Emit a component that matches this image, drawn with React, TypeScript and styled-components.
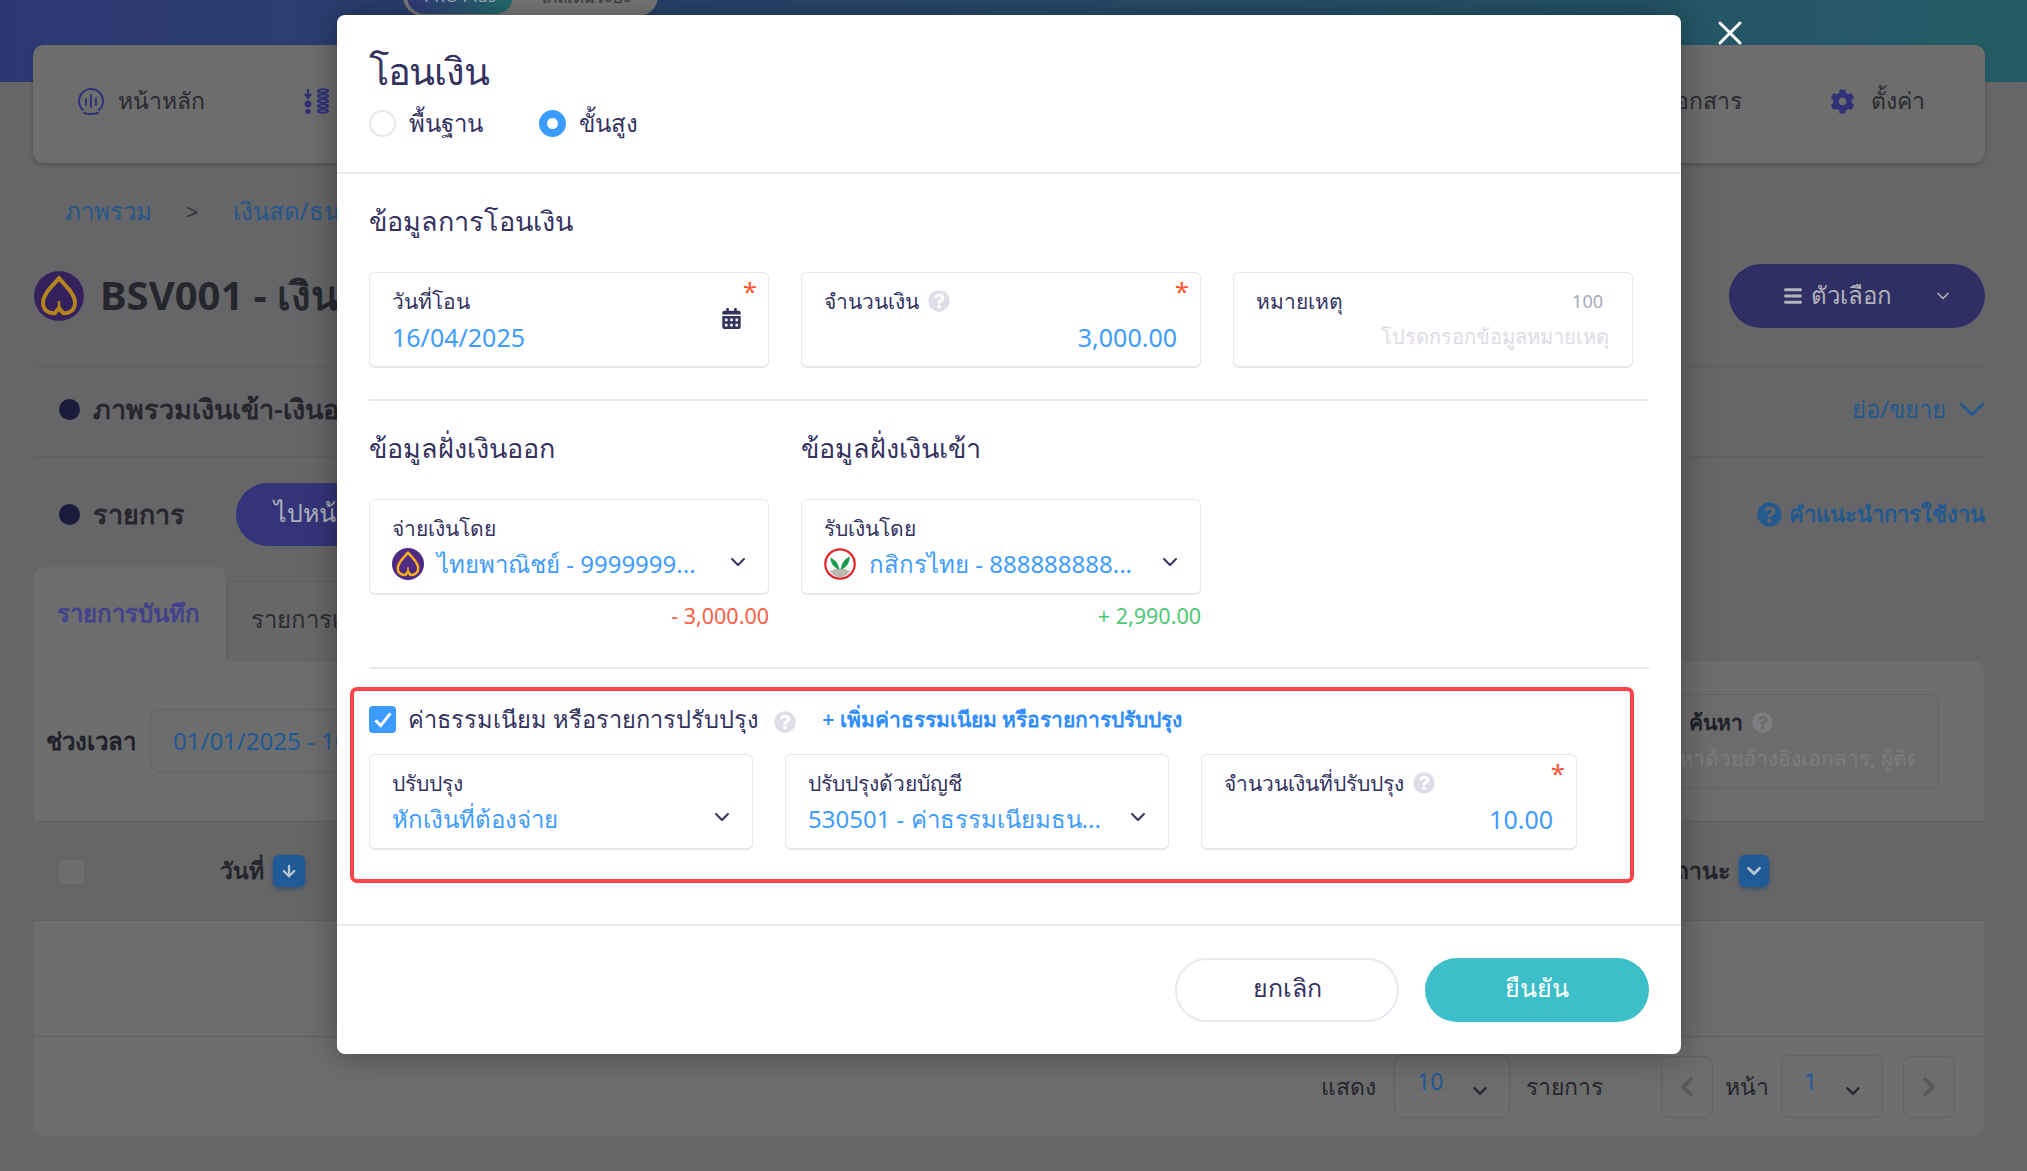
import React from "react";
import styled, { createGlobalStyle } from "styled-components";
import { ChevronDown, ChevronLeft, ChevronRight, X, ArrowDown } from "lucide-react";
import { FaCalendarAlt, FaCog, FaQuestionCircle, FaBars } from "react-icons/fa";

const FONT = `"Noto Sans", "Open Sans", Roboto, sans-serif`;

const GlobalStyle = createGlobalStyle`
  html, body {
    margin: 0;
    padding: 0;
    overflow: hidden;
    background: #666668;
  }
  * {
    box-sizing: border-box;
  }
  body {
    font-family: ${FONT};
  }
`;

const Page = styled.div`
  position: relative;
  width: 2027px;
  height: 1171px;
  overflow: hidden;
  padding: 45px 42px 0 33px;
  background: linear-gradient(90deg, #2d3873 0%, #235c64 100%) top / 100% 82px no-repeat, #666668;
`;

const PromoPill = styled.div`
  position: absolute;
  left: 403px;
  top: -24px;
  width: 255px;
  height: 40px;
  display: flex;
  align-items: center;
  gap: 26px;
  padding: 0 4px;
  border-radius: 20px;
  background: #7a7a7a;
  font-size: 17px;
  color: #3a3a3a;
`;

const PromoBadge = styled.span`
  width: 106px;
  height: 36px;
  border-radius: 18px;
  line-height: 36px;
  text-align: center;
  color: #a8b0c0;
  background: linear-gradient(90deg, #333a7a, #24706e);
`;

const Nav = styled.nav`
  height: 118px;
  display: flex;
  align-items: center;
  padding: 0 60px 6px 45px;
  border-radius: 10px;
  background: #6d6d6d;
  box-shadow: 0 2px 4px rgba(0, 0, 0, 0.2);
`;

const NavItem = styled.div<{ $gap?: number }>`
  display: flex;
  align-items: center;
  gap: 14px;
  margin-right: ${(p) => p.$gap ?? 0}px;
  font-size: 23px;
  color: #2a2a30;
  white-space: nowrap;
  svg {
    color: #31317a;
    flex: none;
  }
`;

const NavSpacer = styled.div`
  flex: 1;
`;

const GearIcon = styled(FaCog)`
  margin-right: 2px;
`;

const Crumbs = styled.div`
  display: flex;
  align-items: center;
  height: 32px;
  margin-top: 32px;
  margin-bottom: 1px;
  padding-left: 32px;
  font-size: 24px;
  color: #24578c;
`;

const CrumbSep = styled.span`
  margin: 0 34px;
  color: #33333a;
  font-size: 22px;
`;

const TitleRow = styled.div`
  display: flex;
  align-items: center;
  justify-content: space-between;
  height: 103px;
  margin-top: 37px;
  padding-bottom: 39px;
  border-bottom: 1px solid #5f5f62;
`;

const TitleLeft = styled.div`
  display: flex;
  align-items: center;
  gap: 16px;
  padding-left: 1px;
`;

const PageTitle = styled.h1`
  margin: 0;
  font-size: 40px;
  font-weight: 700;
  color: #26262e;
  white-space: nowrap;
`;

const OptionButton = styled.div`
  width: 256px;
  height: 64px;
  display: flex;
  align-items: center;
  justify-content: space-between;
  padding: 0 32px 0 54px;
  border-radius: 32px;
  background: #2f2f66;
  color: #b4b4b8;
  font-size: 24px;
`;

const OptionLabel = styled.span`
  display: flex;
  align-items: center;
  gap: 8px;
`;

const SectionRow = styled.div<{ $ruled?: boolean }>`
  display: flex;
  align-items: center;
  justify-content: space-between;
  height: ${(p) => (p.$ruled ? "90px" : "63px")};
  margin-top: ${(p) => (p.$ruled ? "0" : "26px")};
  padding-bottom: ${(p) => (p.$ruled ? "5px" : "0")};
  border-bottom: ${(p) => (p.$ruled ? "1px solid #5f5f62" : "none")};
`;

const SectionLeft = styled.div`
  display: flex;
  align-items: center;
`;

const Bullet = styled.span`
  width: 21px;
  height: 21px;
  margin: 0 13px 0 26px;
  border-radius: 50%;
  background: #1b1b3c;
`;

const SectionName = styled.span`
  font-size: 27px;
  font-weight: 600;
  color: #26262e;
  white-space: nowrap;
`;

const GotoButton = styled.div`
  width: 300px;
  height: 63px;
  margin-left: 51px;
  padding-left: 38px;
  border-radius: 32px;
  line-height: 58px;
  background: #34347a;
  color: #b0b0b8;
  font-size: 25px;
`;

const LinkText = styled.span<{ $bold?: boolean }>`
  display: flex;
  align-items: center;
  gap: ${(p) => (p.$bold ? "7px" : "13px")};
  font-size: ${(p) => (p.$bold ? "22px" : "24px")};
  font-weight: ${(p) => (p.$bold ? 600 : 400)};
  color: #22598f;
`;

const Tabs = styled.div`
  display: flex;
  align-items: flex-end;
  height: 94px;
  margin-top: 20px;
`;

const ActiveTab = styled.div`
  width: 194px;
  height: 95px;
  margin-bottom: -1px;
  padding: 27px 0 0 23px;
  position: relative;
  z-index: 1;
  border: 1px solid #656567;
  border-bottom: none;
  border-radius: 10px 10px 0 0;
  background: #6d6d6d;
  color: #42428c;
  font-size: 24px;
  font-weight: 600;
  white-space: nowrap;
`;

const IdleTab = styled.div`
  width: 300px;
  height: 79px;
  padding: 18px 0 0 23px;
  border: 1px solid #5f5f62;
  border-bottom: none;
  background: #686868;
  color: #2c2c33;
  font-size: 24px;
  white-space: nowrap;
`;

const Panel = styled.div`
  height: 477px;
  border: 1px solid #656567;
  border-radius: 0 10px 10px 10px;
  background: #6d6d6d;
`;

const FilterRow = styled.div`
  height: 160px;
  display: flex;
  align-items: center;
  justify-content: space-between;
  padding: 0 45px 0 12px;
`;

const FilterLeft = styled.div`
  display: flex;
  align-items: center;
  gap: 14px;
`;

const FilterLabel = styled.span`
  font-size: 24px;
  font-weight: 600;
  color: #20202a;
  white-space: nowrap;
`;

const DateBox = styled.div`
  width: 400px;
  height: 64px;
  padding-left: 22px;
  border: 1px solid #626265;
  border-radius: 10px;
  line-height: 62px;
  color: #1f5a96;
  font-size: 24px;
`;

const SearchBox = styled.div`
  width: 309px;
  height: 95px;
  padding: 12px 23px 0 20px;
  border: 1px solid #626265;
  border-radius: 8px;
`;

const SearchLabel = styled.div`
  display: flex;
  align-items: center;
  gap: 9px;
  height: 32px;
  margin-left: 38px;
  font-size: 21px;
  font-weight: 600;
  color: #20202a;
  svg {
    color: #7e7e82;
  }
`;

const SearchHint = styled.div`
  margin-top: 3px;
  font-size: 21px;
  color: #7c7c80;
  white-space: nowrap;
  overflow: hidden;
`;

const HeadRow = styled.div`
  height: 100px;
  display: flex;
  align-items: center;
  padding: 0 215px 0 24px;
  border-top: 1px solid #616164;
  border-bottom: 1px solid #616164;
  background: #666667;
  font-size: 23px;
  font-weight: 600;
  color: #24242c;
`;

const HeadCheck = styled.span`
  width: 27px;
  height: 27px;
  margin-right: 135px;
  border: 1px solid #626265;
  border-radius: 5px;
  background: #6d6d6d;
`;

const SortBadge = styled.span<{ $w: number }>`
  display: inline-flex;
  align-items: center;
  justify-content: center;
  width: ${(p) => p.$w}px;
  height: 32px;
  border-radius: 6px;
  background: #1f5a96;
  color: #b9c4d0;
  box-shadow: 0 2px 5px rgba(20, 60, 110, 0.5);
`;

const HeadCell = styled.span<{ $push?: boolean }>`
  display: flex;
  align-items: center;
  gap: 9px;
  margin-left: ${(p) => (p.$push ? "auto" : "0")};
`;

const EmptyRow = styled.div`
  height: 116px;
  border-bottom: 1px solid #616164;
`;

const PagerRow = styled.div`
  height: 99px;
  display: flex;
  align-items: center;
  justify-content: flex-end;
  padding-right: 29px;
  font-size: 23px;
  color: #26262e;
`;

const PagerSelect = styled.div<{ $w: number; $ml: number }>`
  position: relative;
  width: ${(p) => p.$w}px;
  height: 63px;
  margin: 0 16px 0 ${(p) => p.$ml}px;
  padding: 9px 0 0 22px;
  border: 1px solid #626265;
  border-radius: 8px;
  color: #1f5a96;
  svg {
    position: absolute;
    right: 18px;
    top: 24px;
    color: #222230;
  }
`;

const PagerArrow = styled.div<{ $ml: number; $mr: number }>`
  width: 52px;
  height: 62px;
  margin: 0 ${(p) => p.$mr}px 0 ${(p) => p.$ml}px;
  display: flex;
  align-items: center;
  justify-content: center;
  border: 1px solid #626265;
  border-radius: 8px;
  color: #57575c;
`;

const Modal = styled.div`
  position: absolute;
  left: 337px;
  top: 15px;
  width: 1344px;
  height: 1039px;
  display: flex;
  flex-direction: column;
  border-radius: 8px;
  background: #fff;
  color: #34335f;
  box-shadow: 0 0 34px rgba(0, 0, 0, 0.35);
`;

const CloseButton = styled.div`
  position: absolute;
  left: 1373px;
  top: 0px;
  width: 40px;
  height: 36px;
  color: #fff;
  display: flex;
  align-items: center;
  justify-content: center;
`;

const ModalHead = styled.div`
  height: 159px;
  padding: 29px 32px 0;
  border-bottom: 2px solid #e8e8f1;
`;

const ModalTitle = styled.h2`
  margin: 0;
  height: 52px;
  line-height: 52px;
  font-size: 38px;
  font-weight: 500;
  letter-spacing: -1.3px;
`;

const RadioRow = styled.div`
  display: flex;
  align-items: center;
  margin-top: 1px;
  height: 52px;
  font-size: 24px;
`;

const Radio = styled.span<{ $on?: boolean }>`
  width: 27px;
  height: 27px;
  margin-right: 13px;
  border-radius: 50%;
  background: #fff;
  border: ${(p) => (p.$on ? "8px solid #3b9bff" : "2px solid #e6e6ef")};
`;

const RadioLabel = styled.span`
  margin-right: 56px;
`;

const ModalBody = styled.div`
  flex: 1;
  padding: 0 32px;
`;

const Heading = styled.h3`
  margin: 0;
  height: 40px;
  line-height: 38px;
  font-size: 27px;
  font-weight: 500;
  white-space: nowrap;
`;

const Rule = styled.div`
  height: 2px;
  background: #e8e8f1;
`;

const Row3 = styled.div`
  display: grid;
  grid-template-columns: repeat(3, 400px);
  gap: 32px;
`;

const Field = styled.div`
  position: relative;
  height: 96px;
  padding: 11px 23px 0 22px;
  border: 1px solid #e6e6ef;
  border-bottom-width: 2px;
  border-radius: 6px;
  background: #fff;
  min-width: 0;
`;

const FieldLabel = styled.div`
  display: flex;
  align-items: center;
  justify-content: space-between;
  height: 34px;
  font-size: 21px;
  font-weight: 500;
  white-space: nowrap;
`;

const LabelLeft = styled.span`
  display: flex;
  align-items: center;
  gap: 9px;
`;

const HelpIcon = styled(FaQuestionCircle)<{ $shift?: boolean }>`
  color: #dedee9;
  flex: none;
  margin-left: ${(p) => (p.$shift ? "15px" : "0")};
  margin-top: ${(p) => (p.$shift ? "5px" : "0")};
`;

const Counter = styled.span`
  margin-right: 6px;
  font-size: 18px;
  font-weight: 400;
  color: #a9a9bd;
`;

const FieldValue = styled.div<{ $right?: boolean; $muted?: boolean; $thai?: boolean }>`
  display: flex;
  align-items: center;
  justify-content: ${(p) => (p.$right ? "flex-end" : "flex-start")};
  gap: 13px;
  height: 38px;
  padding-right: ${(p) => (p.$right ? "0" : "24px")};
  font-size: ${(p) => (p.$muted ? "20px" : p.$thai ? "24px" : "25px")};
  color: ${(p) => (p.$muted ? "#dcdce6" : "#419cff")};
  white-space: nowrap;
  overflow: hidden;
`;

const Required = styled.span`
  position: absolute;
  right: 11px;
  top: 5px;
  font-size: 26px;
  line-height: 26px;
  color: #ff5533;
`;

const CalendarIcon = styled(FaCalendarAlt)`
  position: absolute;
  right: 26px;
  top: 35px;
  color: #34335f;
`;

const FieldChevron = styled(ChevronDown)`
  position: absolute;
  right: 18px;
  top: 50px;
  color: #34335f;
`;

const Delta = styled.div<{ $plus?: boolean }>`
  height: 26px;
  margin-top: 8px;
  margin-bottom: 2px;
  line-height: 26px;
  text-align: right;
  font-size: 21.5px;
  color: ${(p) => (p.$plus ? "#4cc777" : "#ff5f45")};
`;

const Spaced = styled.div<{ $top: number }>`
  margin-top: ${(p) => p.$top}px;
`;

const AdjustBox = styled.div`
  width: 1284px;
  height: 196px;
  margin: 18px 0 0 -19px;
  padding: 15px 0 0 15px;
  border: 4px solid #ff444c;
  border-radius: 7px;
`;

const AdjustHead = styled.div`
  display: flex;
  align-items: center;
  height: 27px;
  font-size: 23.6px;
  white-space: nowrap;
`;

const Check = styled.span`
  width: 27px;
  height: 27px;
  margin-right: 12px;
  display: flex;
  align-items: center;
  justify-content: center;
  border-radius: 4px;
  background: #3b9bff;
  color: #fff;
`;

const AdjustLink = styled.span`
  margin-left: 26px;
  font-size: 21px;
  font-weight: 600;
  color: #2f8dff;
`;

const AdjustRow = styled.div`
  display: grid;
  grid-template-columns: 384px 384px 376px;
  gap: 32px;
  margin-top: 21px;
`;

const ModalFoot = styled.div`
  height: 130px;
  display: flex;
  justify-content: flex-end;
  gap: 26px;
  padding: 32px 32px 0;
  border-top: 2px solid #e8e8f1;
`;

const FootButton = styled.div<{ $primary?: boolean }>`
  width: 224px;
  height: 64px;
  display: flex;
  align-items: center;
  justify-content: center;
  padding-bottom: 4px;
  border-radius: 32px;
  border: ${(p) => (p.$primary ? "none" : "2px solid #e8e8f1")};
  background: ${(p) => (p.$primary ? "#3dbfca" : "#fff")};
  color: ${(p) => (p.$primary ? "#fff" : "#34335f")};
  font-size: 25px;
`;

function ScbLogo({ size, dim }: { size: number; dim?: boolean }) {
  return (
    <svg width={size} height={size} viewBox="0 0 50 50" style={{ flex: "none" }}>
      <circle cx="25" cy="25" r="25" fill={dim ? "#33205c" : "#4e2a84"} />
      <path
        d="M25 7 C30 14 41 22 41 32 C41 39 35 43 29 42 L25 37 L21 42 C15 43 9 39 9 32 C9 22 20 14 25 7 Z"
        fill="none"
        stroke={dim ? "#b5851c" : "#f9ae1d"}
        strokeWidth="4"
        strokeLinejoin="round"
      />
      <path d="M25 37 V30" stroke={dim ? "#b5851c" : "#f9ae1d"} strokeWidth="2.5" />
    </svg>
  );
}

function KbankLogo({ size }: { size: number }) {
  return (
    <svg width={size} height={size} viewBox="0 0 50 50" style={{ flex: "none" }}>
      <circle cx="25" cy="25" r="23" fill="#fff" stroke="#e4262c" strokeWidth="3.5" />
      <path d="M9 36 Q25 27 41 36 Q34 46 25 46 Q16 46 9 36 Z" fill="#bdb8b2" />
      <path d="M23.5 34 C23 25 19 20 10 15 C10 24 15 30 23.5 34 Z" fill="#169b4a" />
      <path d="M26.5 34 C27 24 31 19 40 13 C41 23 35 30 26.5 34 Z" fill="#169b4a" />
    </svg>
  );
}

function HomeIcon() {
  return (
    <svg width="26" height="28" viewBox="0 0 26 28" fill="none" stroke="currentColor" strokeWidth="2" strokeLinecap="round">
      <path d="M5 23 A12 12 0 1 1 21 23" />
      <path d="M6 26 Q13 28 20 26" />
      <path d="M8 12 V18 M13 8 V20 M18 11 V18" />
    </svg>
  );
}

function LedgerIcon() {
  return (
    <svg width="28" height="26" viewBox="0 0 28 26" fill="currentColor">
      <path d="M6 1 V9 M3 6 L6 10 L9 6" fill="none" stroke="currentColor" strokeWidth="2.2" />
      <circle cx="6" cy="16" r="3.4" />
      <circle cx="6" cy="23.5" r="2.6" />
      {[3, 8, 13, 18, 23].map((y) => (
        <ellipse key={y} cx="21" cy={y} rx="5" ry="1.7" fill="none" stroke="currentColor" strokeWidth="2" />
      ))}
    </svg>
  );
}

function WideChevron() {
  return (
    <svg width="26" height="15" viewBox="0 0 26 15" fill="none" stroke="currentColor" strokeWidth="3">
      <path d="M1.5 1.5 L13 12.5 L24.5 1.5" />
    </svg>
  );
}

export default function App() {
  return (
    <>
      <GlobalStyle />
      <Page>
        <PromoPill>
          <PromoBadge>PRO Plus</PromoBadge>
          ใกล้เต็มระยะ
        </PromoPill>

        <Nav>
          <NavItem $gap={97}>
            <HomeIcon />
            หน้าหลัก
          </NavItem>
          <NavItem>
            <LedgerIcon />
            บัญชี
          </NavItem>
          <NavSpacer />
          <NavItem $gap={88}>เอกสาร</NavItem>
          <NavItem>
            <GearIcon size={25} />
            ตั้งค่า
          </NavItem>
        </Nav>

        <Crumbs>
          ภาพรวม
          <CrumbSep>&gt;</CrumbSep>
          เงินสด/ธนาคาร
        </Crumbs>

        <TitleRow>
          <TitleLeft>
            <ScbLogo size={50} dim />
            <PageTitle>BSV001 - เงินสด</PageTitle>
          </TitleLeft>
          <OptionButton>
            <OptionLabel>
              <FaBars size={20} />
              ตัวเลือก
            </OptionLabel>
            <ChevronDown size={20} />
          </OptionButton>
        </TitleRow>

        <SectionRow $ruled>
          <SectionLeft>
            <Bullet />
            <SectionName>ภาพรวมเงินเข้า-เงินออก</SectionName>
          </SectionLeft>
          <LinkText>
            ย่อ/ขยาย
            <WideChevron />
          </LinkText>
        </SectionRow>

        <SectionRow>
          <SectionLeft>
            <Bullet />
            <SectionName>รายการ</SectionName>
            <GotoButton>ไปหน้า</GotoButton>
          </SectionLeft>
          <LinkText $bold>
            <FaQuestionCircle size={25} />
            คำแนะนำการใช้งาน
          </LinkText>
        </SectionRow>

        <Tabs>
          <ActiveTab>รายการบันทึก</ActiveTab>
          <IdleTab>รายการเดินบัญชี</IdleTab>
        </Tabs>

        <Panel>
          <FilterRow>
            <FilterLeft>
              <FilterLabel>ช่วงเวลา</FilterLabel>
              <DateBox>01/01/2025 - 16/04/2025</DateBox>
            </FilterLeft>
            <SearchBox>
              <SearchLabel>
                ค้นหา
                <FaQuestionCircle size={21} />
              </SearchLabel>
              <SearchHint>ค้นหาด้วยอ้างอิงเอกสาร, ผู้ติดต่อ</SearchHint>
            </SearchBox>
          </FilterRow>
          <HeadRow>
            <HeadCheck />
            <HeadCell>
              วันที่
              <SortBadge $w={32}>
                <ArrowDown size={18} strokeWidth={3} />
              </SortBadge>
            </HeadCell>
            <HeadCell $push>
              สถานะ
              <SortBadge $w={30}>
                <ChevronDown size={22} strokeWidth={3} />
              </SortBadge>
            </HeadCell>
          </HeadRow>
          <EmptyRow />
          <PagerRow>
            แสดง
            <PagerSelect $w={116} $ml={18}>
              10
              <ChevronDown size={22} strokeWidth={2.5} />
            </PagerSelect>
            รายการ
            <PagerArrow $ml={58} $mr={12}>
              <ChevronLeft size={30} strokeWidth={3} />
            </PagerArrow>
            หน้า
            <PagerSelect $w={102} $ml={12}>
              1
              <ChevronDown size={22} strokeWidth={2.5} />
            </PagerSelect>
            <PagerArrow $ml={4} $mr={0}>
              <ChevronRight size={30} strokeWidth={3} />
            </PagerArrow>
          </PagerRow>
        </Panel>

        <Modal>
          <CloseButton>
            <X size={40} strokeWidth={1.8} />
          </CloseButton>
          <ModalHead>
            <ModalTitle>โอนเงิน</ModalTitle>
            <RadioRow>
              <Radio />
              <RadioLabel>พื้นฐาน</RadioLabel>
              <Radio $on />
              <span>ขั้นสูง</span>
            </RadioRow>
          </ModalHead>

          <ModalBody>
            <Spaced $top={28}>
              <Heading>ข้อมูลการโอนเงิน</Heading>
            </Spaced>
            <Spaced $top={30}>
              <Row3>
                <Field>
                  <FieldLabel>วันที่โอน</FieldLabel>
                  <FieldValue>16/04/2025</FieldValue>
                  <Required>*</Required>
                  <CalendarIcon size={21} />
                </Field>
                <Field>
                  <FieldLabel>
                    <LabelLeft>
                      จำนวนเงิน
                      <HelpIcon size={22} />
                    </LabelLeft>
                  </FieldLabel>
                  <FieldValue $right>3,000.00</FieldValue>
                  <Required>*</Required>
                </Field>
                <Field>
                  <FieldLabel>
                    หมายเหตุ
                    <Counter>100</Counter>
                  </FieldLabel>
                  <FieldValue $right $muted>
                    โปรดกรอกข้อมูลหมายเหตุ
                  </FieldValue>
                </Field>
              </Row3>
            </Spaced>
            <Spaced $top={31}>
              <Rule />
            </Spaced>

            <Spaced $top={28}>
              <Row3>
                <Heading>ข้อมูลฝั่งเงินออก</Heading>
                <Heading>ข้อมูลฝั่งเงินเข้า</Heading>
              </Row3>
            </Spaced>
            <Spaced $top={30}>
              <Row3>
                <div>
                  <Field>
                    <FieldLabel>จ่ายเงินโดย</FieldLabel>
                    <FieldValue $thai>
                      <ScbLogo size={32} />
                      ไทยพาณิชย์ - 9999999...
                    </FieldValue>
                    <FieldChevron size={24} />
                  </Field>
                  <Delta>- 3,000.00</Delta>
                </div>
                <div>
                  <Field>
                    <FieldLabel>รับเงินโดย</FieldLabel>
                    <FieldValue $thai>
                      <KbankLogo size={32} />
                      กสิกรไทย - 888888888...
                    </FieldValue>
                    <FieldChevron size={24} />
                  </Field>
                  <Delta $plus>+ 2,990.00</Delta>
                </div>
              </Row3>
            </Spaced>
            <Spaced $top={36}>
              <Rule />
            </Spaced>

            <AdjustBox>
              <AdjustHead>
                <Check>
                  <svg width="21" height="21" viewBox="0 0 24 24" fill="none" stroke="currentColor" strokeWidth="3.4">
                    <path d="M4 13 L10 19 L21 5" />
                  </svg>
                </Check>
                ค่าธรรมเนียม หรือรายการปรับปรุง
                <HelpIcon size={22} $shift />
                <AdjustLink>+ เพิ่มค่าธรรมเนียม หรือรายการปรับปรุง</AdjustLink>
              </AdjustHead>
              <AdjustRow>
                <Field>
                  <FieldLabel>ปรับปรุง</FieldLabel>
                  <FieldValue $thai>หักเงินที่ต้องจ่าย</FieldValue>
                  <FieldChevron size={24} />
                </Field>
                <Field>
                  <FieldLabel>ปรับปรุงด้วยบัญชี</FieldLabel>
                  <FieldValue $thai>530501 - ค่าธรรมเนียมธน...</FieldValue>
                  <FieldChevron size={24} />
                </Field>
                <Field>
                  <FieldLabel>
                    <LabelLeft>
                      จำนวนเงินที่ปรับปรุง
                      <HelpIcon size={22} />
                    </LabelLeft>
                  </FieldLabel>
                  <FieldValue $right>10.00</FieldValue>
                  <Required>*</Required>
                </Field>
              </AdjustRow>
            </AdjustBox>
          </ModalBody>

          <ModalFoot>
            <FootButton>ยกเลิก</FootButton>
            <FootButton $primary>ยืนยัน</FootButton>
          </ModalFoot>
        </Modal>
      </Page>
    </>
  );
}
